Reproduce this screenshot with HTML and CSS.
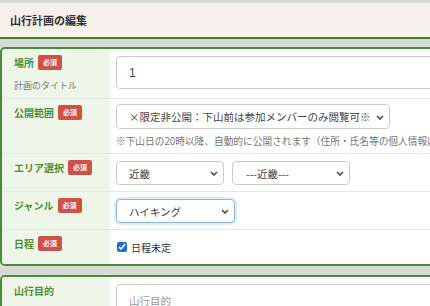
FILE: index.html
```html
<!DOCTYPE html>
<html>
  <head>
    <meta charset="UTF-8">
    <title>山行計画の編集</title>
    <link rel="stylesheet" href="styles.css">
  </head>
  <body>
    <div class="page">
      <div class="page-head">山行計画の編集</div>

      <div class="panel">
        <div class="row row-first">
          <div class="row-label">
            <div class="label-head"><span class="label-text">場所</span><span class="badge">必須</span></div>
            <div class="label-sub">計画のタイトル</div>
          </div>
          <div class="row-field field-title">
            <input type="text" class="text-input big" value="1">
          </div>
        </div>

        <div class="row">
          <div class="row-label">
            <div class="label-head"><span class="label-text">公開範囲</span><span class="badge">必須</span></div>
          </div>
          <div class="row-field field-open">
            <div class="select-wrap w-open">
              <select class="select">
                <option>×限定非公開：下山前は参加メンバーのみ閲覧可※</option>
              </select>
              <svg class="chev" width="8" height="5" viewBox="0 0 8 5"><path d="M1 1l3 3 3-3" fill="none" stroke="#444" stroke-width="1.5"/></svg>
            </div>
            <div class="note">※下山日の20時以降、自動的に公開されます（住所・氏名等の個人情報は除く）</div>
          </div>
        </div>

        <div class="row">
          <div class="row-label">
            <div class="label-head"><span class="label-text">エリア選択</span><span class="badge">必須</span></div>
          </div>
          <div class="row-field field-select">
            <div class="select-group">
              <div class="select-wrap w-area">
                <select class="select">
                  <option>近畿</option>
                </select>
                <svg class="chev" width="8" height="5" viewBox="0 0 8 5"><path d="M1 1l3 3 3-3" fill="none" stroke="#444" stroke-width="1.5"/></svg>
              </div>
              <div class="select-wrap w-pref">
                <select class="select">
                  <option>---近畿---</option>
                </select>
                <svg class="chev" width="8" height="5" viewBox="0 0 8 5"><path d="M1 1l3 3 3-3" fill="none" stroke="#444" stroke-width="1.5"/></svg>
              </div>
            </div>
          </div>
        </div>

        <div class="row">
          <div class="row-label">
            <div class="label-head"><span class="label-text">ジャンル</span><span class="badge">必須</span></div>
          </div>
          <div class="row-field field-select">
            <div class="select-wrap w-genre">
              <select class="select is-focus">
                <option>ハイキング</option>
              </select>
              <svg class="chev" width="8" height="5" viewBox="0 0 8 5"><path d="M1 1l3 3 3-3" fill="none" stroke="#444" stroke-width="1.5"/></svg>
            </div>
          </div>
        </div>

        <div class="row">
          <div class="row-label">
            <div class="label-head"><span class="label-text">日程</span><span class="badge">必須</span></div>
          </div>
          <div class="row-field field-check">
            <label class="check"><input type="checkbox" checked>日程未定</label>
          </div>
        </div>
      </div>

      <div class="panel">
        <div class="row row-first">
          <div class="row-label">
            <div class="label-head"><span class="label-text">山行目的</span></div>
          </div>
          <div class="row-field field-purpose">
            <input type="text" class="text-input big" placeholder="山行目的">
          </div>
        </div>
      </div>
    </div>
  </body>
</html>
```

FILE: styles.css
```css
html, body {
  overflow: hidden;
}
body {
  margin: 0;
  background: #d6dbd4;
  font-family: "Noto Sans CJK JP", "Noto Sans", sans-serif;
  color: #333;
}
.page {
  width: 580px;
  padding-top: 3px;
}
.page-head {
  height: 34px;
  display: flex;
  align-items: center;
  padding-left: 10px;
  background: #f4f1ea;
  border-bottom: 2px solid #3f7e33;
  font-size: 11px;
  font-weight: bold;
  color: #333;
  margin-bottom: 8px;
}
.panel {
  background: #fff;
  border: 2px solid #4b8a3b;
  border-radius: 5px;
  margin-bottom: 9px;
  overflow: hidden;
}
.row {
  display: flex;
  border-top: 1px solid #e6e8e4;
}
.row-first {
  border-top: none;
}
.row-label {
  flex: 0 0 108px;
  box-sizing: border-box;
  padding: 5px 0 0 12px;
  background: #eef5e9;
}
.label-head {
  display: flex;
  align-items: center;
  height: 16px;
}
.label-text {
  font-size: 10px;
  font-weight: bold;
  color: #4e8d33;
}
.badge {
  margin-left: 4px;
  height: 15px;
  line-height: 15px;
  padding: 0 5px;
  background: #d0504a;
  color: #fff;
  font-size: 7px;
  font-weight: bold;
  border-radius: 2px;
}
.label-sub {
  margin-top: 9px;
  font-size: 9px;
  color: #777;
}
.row-field {
  flex: 1;
  padding: 7px 0 6px 6px;
}
.field-title {
  padding-bottom: 9px;
}
.field-open {
  padding-top: 5px;
  padding-bottom: 5px;
}
.field-check {
  padding-top: 10px;
  padding-bottom: 10px;
}
.text-input {
  display: block;
  box-sizing: border-box;
  width: 100%;
  height: 33px;
  padding: 0 12px;
  border: 1px solid #ccc;
  border-radius: 4px;
  font-family: "Liberation Sans", "Noto Sans CJK JP", sans-serif;
  font-size: 12px;
  color: #444;
}
.text-input::placeholder {
  font-family: "Noto Sans CJK JP", sans-serif;
  font-size: 10.5px;
  color: #999;
}
.select-group {
  display: flex;
  gap: 8px;
}
.select-wrap {
  position: relative;
}
.w-open { width: 274px; }
.w-area { width: 108px; }
.w-pref { width: 118px; }
.w-genre { width: 119px; }
.select {
  appearance: none;
  display: block;
  box-sizing: border-box;
  width: 100%;
  height: 24px;
  padding: 0 18px 0 12px;
  border: 1px solid #ccc;
  border-radius: 4px;
  background: #fff;
  font-family: "Noto Sans CJK JP", sans-serif;
  font-size: 10.5px;
  color: #444;
}
.w-open .select {
  height: 25px;
}
.w-pref .select {
  padding-left: 13px;
}
.select.is-focus {
  border-color: #86b7e3;
  box-shadow: 0 0 0 2px rgba(134, 183, 227, 0.25);
}
.chev {
  position: absolute;
  right: 6px;
  top: 50%;
  margin-top: -2px;
  pointer-events: none;
}
.note {
  margin-top: 5px;
  line-height: 14px;
  font-size: 9.7px;
  color: #777;
  white-space: nowrap;
}
.check {
  display: flex;
  align-items: center;
  height: 14px;
  font-size: 10px;
  color: #333;
}
.check input {
  width: 10px;
  height: 10px;
  margin: 0 4px 0 1px;
  accent-color: #1b6fd8;
}
```
